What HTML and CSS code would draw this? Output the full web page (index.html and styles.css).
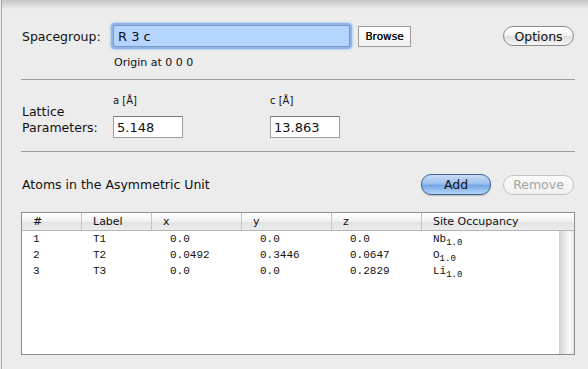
FILE: index.html
```html
<!doctype html>
<html lang="en">
  <head>
    <meta charset="UTF-8" />
    <meta name="viewport" content="width=device-width, initial-scale=1.0" />
    <title>Crystal Structure</title>
    <link rel="stylesheet" href="styles.css">
  </head>
  <body>
    <div class="window">
      <!-- Spacegroup -->
      <div class="sg-row">
        <label class="field-label">Spacegroup:</label>
        <input class="sg-input" type="text" value="R 3 c" />
        <button class="square-btn">Browse</button>
        <button class="pill-btn options">Options</button>
      </div>
      <p class="origin">Origin at 0 0 0</p>

      <hr class="sep" />

      <!-- Lattice -->
      <div class="lattice">
        <div class="lattice-label">Lattice<br />Parameters:</div>
        <div class="lattice-field">
          <span class="small-label">a [Å]</span>
          <input class="num-input" type="text" value="5.148" />
        </div>
        <div class="lattice-field">
          <span class="small-label">c [Å]</span>
          <input class="num-input" type="text" value="13.863" />
        </div>
      </div>

      <hr class="sep" />

      <!-- Atoms -->
      <div class="atoms-head">
        <h2>Atoms in the Asymmetric Unit</h2>
        <button class="pill-btn add">Add</button>
        <button class="pill-btn remove" disabled>Remove</button>
      </div>

      <div class="table-box">
        <div class="table-head">
          <span class="c-num">#</span>
          <span class="c-label">Label</span>
          <span class="c-x">x</span>
          <span class="c-y">y</span>
          <span class="c-z">z</span>
          <span class="c-occ">Site Occupancy</span>
        </div>
        <div class="table-body">
          <div class="rows">
            <div class="row">
              <span class="c-num">1</span><span class="c-label">T1</span>
              <span class="c-x">0.0</span><span class="c-y">0.0</span><span class="c-z">0.0</span>
              <span class="c-occ">Nb<sub>1.0</sub></span>
            </div>
            <div class="row">
              <span class="c-num">2</span><span class="c-label">T2</span>
              <span class="c-x">0.0492</span><span class="c-y">0.3446</span><span class="c-z">0.0647</span>
              <span class="c-occ">O<sub>1.0</sub></span>
            </div>
            <div class="row">
              <span class="c-num">3</span><span class="c-label">T3</span>
              <span class="c-x">0.0</span><span class="c-y">0.0</span><span class="c-z">0.2829</span>
              <span class="c-occ">Li<sub>1.0</sub></span>
            </div>
          </div>
          <div class="scroll-track"></div>
        </div>
      </div>
    </div>
  </body>
</html>
```

FILE: styles.css
```css
body {
  margin: 0;
  font-family: "DejaVu Sans", "Liberation Sans", sans-serif;
  color: #111;
  background-color: #ececec;
}
.window {
  height: 369px;
  box-sizing: border-box;
  margin-left: 1px;
  border-left: 1px solid #a4a4a4;
  padding: 25px 13px 0 20px;
  background: linear-gradient(#c4c4c4, #ececec 9px);
}
button,
input {
  font-family: inherit;
  color: #111;
}

/* spacegroup row */
.sg-row {
  display: flex;
  align-items: center;
  height: 22px;
}
.field-label {
  width: 91px;
  font-size: 12.5px;
}
.sg-input {
  box-sizing: border-box;
  width: 237px;
  height: 22px;
  padding: 0 4px;
  font-size: 13px;
  background: #b5d5ff;
  border: 1px solid #7a9ac6;
  border-radius: 2px;
  box-shadow: 0 0 0 2px #8fb6ea, 0 0 2px 3px #b9d2f2;
  outline: none;
}
.square-btn {
  box-sizing: border-box;
  margin-left: 8px;
  width: 53px;
  height: 21px;
  padding: 0;
  font-size: 10.5px;
  background: linear-gradient(#ffffff, #f1f1f1);
  border: 1px solid #9c9c9c;
  text-shadow: 0 0 0.4px #111;
}
.pill-btn {
  box-sizing: border-box;
  height: 20px;
  padding: 0;
  font-size: 12.5px;
  border: 1px solid #8a8a8a;
  border-radius: 10px;
  background: linear-gradient(#ffffff, #f4f4f4 45%, #dedede 55%, #f6f6f6);
}
.options {
  width: 71px;
  margin-left: auto;
  margin-right: 1px;
}
.origin {
  margin: 9px 0 0 92px;
  font-size: 11px;
  line-height: 13px;
}
.sep {
  margin: 10px 0 0 -1px;
  height: 0;
  border: 0;
  border-top: 1px solid #9c9c9c;
}

/* lattice */
.lattice {
  display: grid;
  grid-template-columns: 91px 157px 80px;
  align-items: end;
  height: 61px;
}
.lattice-label {
  font-size: 12.5px;
  line-height: 16px;
  padding-bottom: 5px;
}
.lattice-field {
  display: flex;
  flex-direction: column;
  gap: 10px;
  padding-bottom: 3px;
}
.small-label {
  font-size: 10px;
}
.num-input {
  box-sizing: border-box;
  width: 70px;
  height: 22px;
  padding: 0 3px;
  font-size: 13px;
  background: #fff;
  border: 1px solid #9e9e9e;
  border-top-color: #7c7c7c;
  outline: none;
}

/* atoms header */
.atoms-head {
  display: flex;
  align-items: center;
  margin-top: 22px;
  height: 21px;
}
.atoms-head h2 {
  margin: 0;
  font-size: 12.5px;
  font-weight: normal;
  flex: 1;
}
.add {
  width: 70px;
  height: 21px;
  border-color: #3f5e94;
  background: linear-gradient(#c9dcf6, #9cc1ee 45%, #75a6e6 55%, #b2d4f8);
  box-shadow: 0 1px 1px rgba(0, 0, 0, 0.2);
}
.remove {
  width: 71px;
  margin-left: 12px;
  margin-right: 1px;
  color: #a4a4a4;
  border-color: #c2c2c2;
  background: linear-gradient(#fafafa, #f0f0f0);
}

/* atoms table */
.table-box {
  margin: 17px 0 0 -1px;
  height: 143px;
  box-sizing: border-box;
  border: 1px solid #8e8e8e;
  background: #fff;
  display: flex;
  flex-direction: column;
}
.table-head,
.row {
  display: grid;
  grid-template-columns: 60px 70px 90px 90px 90px 1fr;
}
.table-head {
  height: 17px;
  font-size: 11px;
  line-height: 17px;
  background: linear-gradient(#ffffff, #f0f0f0 50%, #e2e2e2 51%, #ececec);
  border-bottom: 1px solid #b4b4b4;
}
.table-head span {
  padding-left: 11px;
  border-right: 1px solid #c4c4c4;
}
.table-head span:last-child {
  border-right: 0;
}
.table-body {
  flex: 1;
  display: flex;
}
.rows {
  flex: 1;
}
.row {
  height: 16px;
  font-family: "Liberation Mono", monospace;
  font-size: 11px;
  line-height: 16px;
}
.row span {
  padding-left: 11px;
}
.row .c-x,
.row .c-y,
.row .c-z {
  padding-left: 18px;
}
.row sub {
  font-size: 9px;
  vertical-align: -3px;
}
.scroll-track {
  width: 15px;
  background: linear-gradient(90deg, #d0d0d0, #ececec 45%, #fafafa 70%, #e6e6e6);
}
```
